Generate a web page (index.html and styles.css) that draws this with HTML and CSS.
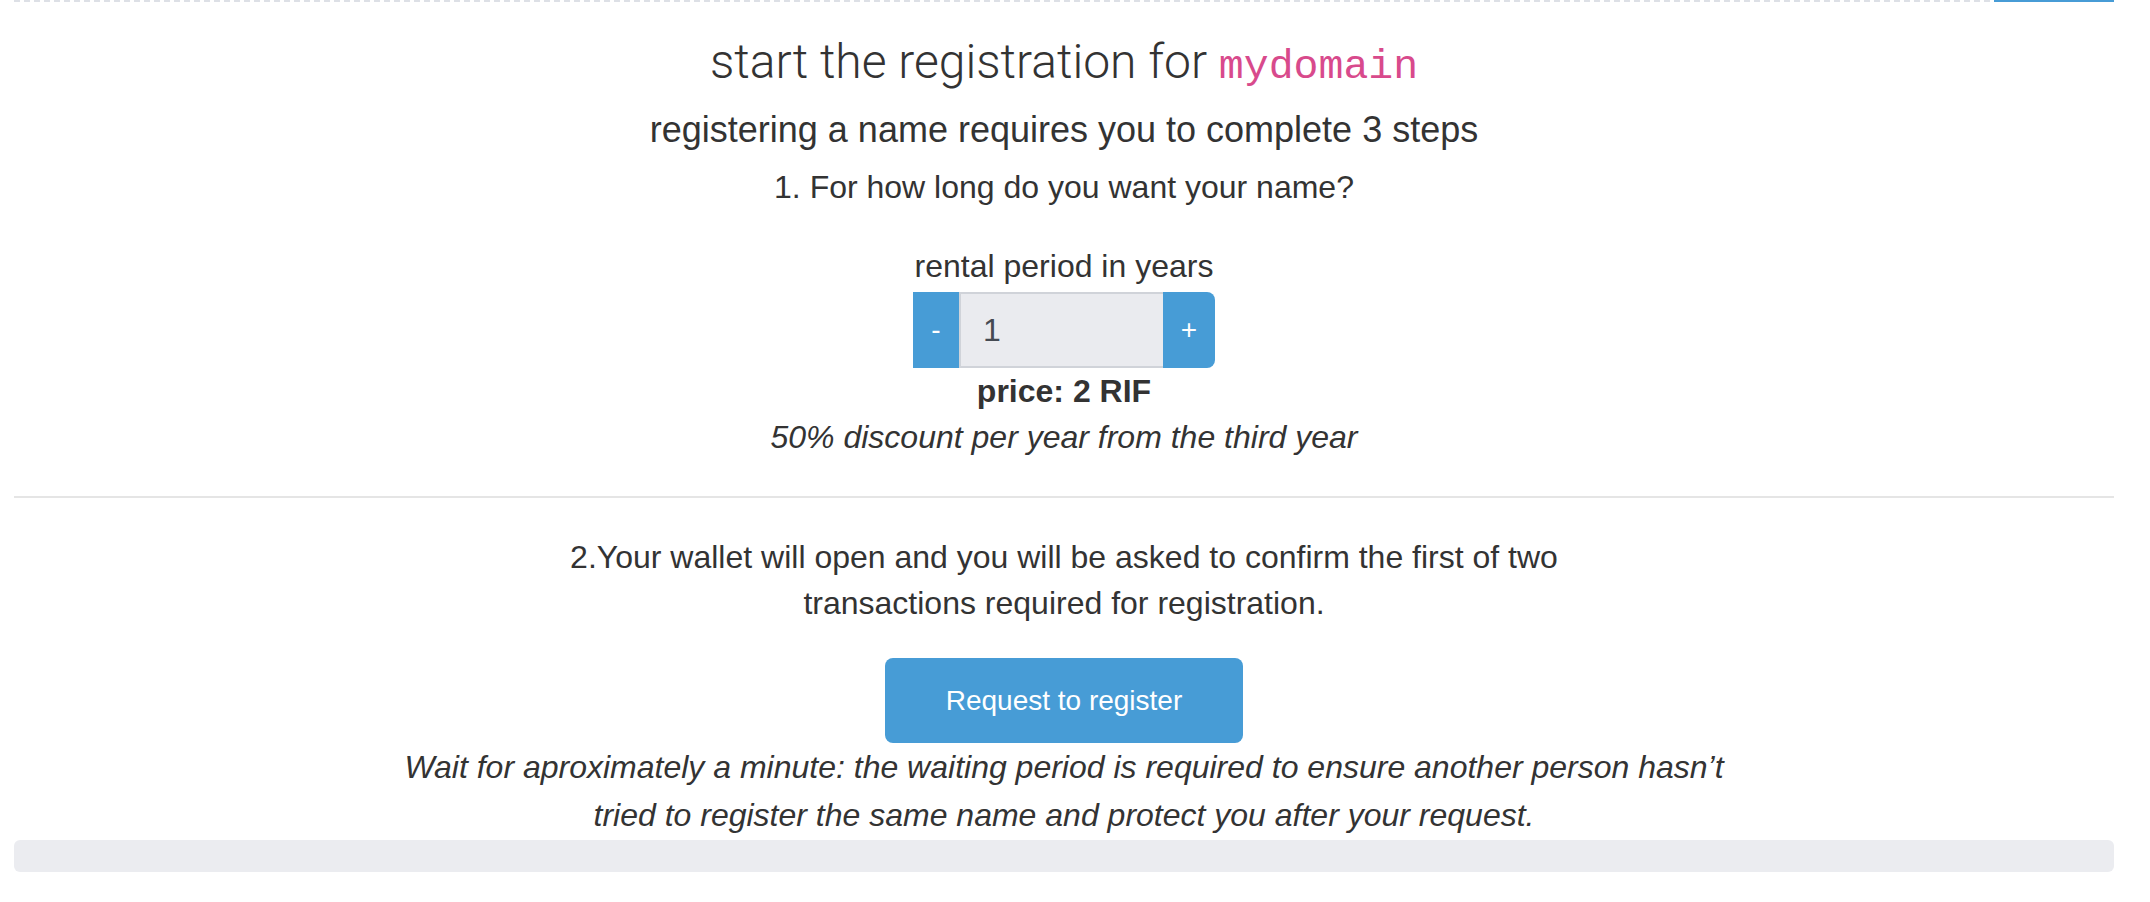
FILE: index.html
```html
<!DOCTYPE html>
<html lang="en">
<head>
<meta charset="utf-8">
<title>Register mydomain</title>
<link rel="stylesheet" href="styles.css">
</head>
<body>
<div class="topbar"><div class="topbar-dashes"></div><div class="topbar-fill"></div></div>
<main class="page">
  <h1 class="title">start the registration for <code class="domain">mydomain</code></h1>
  <h2 class="subtitle">registering a name requires you to complete 3 steps</h2>
  <p class="step step-one">1. For how long do you want your name?</p>
  <label class="period-label" for="years">rental period in years</label>
  <div class="stepper-row">
    <div class="stepper">
      <button class="stepper-btn stepper-minus" type="button">-</button>
      <input id="years" class="stepper-input" type="text" value="1">
      <button class="stepper-btn stepper-plus" type="button">+</button>
    </div>
  </div>
  <p class="price">price: 2 RIF</p>
  <p class="discount">50% discount per year from the third year</p>
  <hr class="divider">
  <p class="step step-two">2.Your wallet will open and you will be asked to confirm the first of two transactions required for registration.</p>
  <button class="register" type="button">Request to register</button>
  <p class="note">Wait for aproximately a minute: the waiting period is required to ensure another person hasn’t tried to register the same name and protect you after your request.</p>
  <div class="progress"></div>
</main>
</body>
</html>
```
FILE: styles.css
```css
html, body {
  margin: 0;
  padding: 0;
  background: #ffffff;
}

body {
  font-family: "Liberation Sans", Arial, sans-serif;
  color: #333333;
}

.topbar {
  display: flex;
  height: 2px;
  margin: 0 36px 0 14px;
}

.topbar-dashes {
  flex: 1;
  background: repeating-linear-gradient(90deg, #dde0e6 0 6px, transparent 6px 10px);
}

.topbar-fill {
  width: 120px;
  background: #479cd6;
}

.page {
  margin: 0 36px 0 14px;
  text-align: center;
}

.title {
  margin: 32px 0 0;
  font-family: Roboto, "Liberation Sans", sans-serif;
  font-size: 48px;
  line-height: 56px;
  font-weight: 300;
  color: #333333;
}

.domain {
  font-family: "Liberation Mono", "DejaVu Sans Mono", monospace;
  font-size: 41.5px;
  font-weight: normal;
  color: #d84a8c;
  padding: 0;
  background: none;
}

.subtitle {
  margin: 13px 0 0;
  font-size: 36px;
  line-height: 44px;
  font-weight: normal;
}

.step {
  font-size: 32px;
  line-height: 46px;
  margin: 0;
}

.step-one {
  margin-top: 12px;
}

.period-label {
  display: block;
  margin-top: 33px;
  font-size: 32px;
  line-height: 46px;
}

.stepper-row {
  display: flex;
  justify-content: center;
  margin-top: 3px;
}

.stepper {
  display: flex;
  height: 76px;
}

.stepper-btn {
  border: 0;
  padding: 0;
  margin: 0;
  background: #479cd6;
  color: #ffffff;
  font-family: "Liberation Sans", Arial, sans-serif;
  font-size: 28px;
  line-height: 76px;
}

.stepper-minus {
  width: 46px;
}

.stepper-plus {
  width: 52px;
  border-radius: 0 8px 8px 0;
}

.stepper-input {
  box-sizing: border-box;
  width: 204px;
  height: 76px;
  margin: 0;
  padding: 0 0 0 22px;
  border: 2px solid #d0d3d9;
  border-right: 0;
  background: #eaebef;
  color: #454a52;
  font-family: "Liberation Sans", Arial, sans-serif;
  font-size: 32px;
  outline: none;
}

.price {
  margin: 0;
  font-size: 32px;
  line-height: 46px;
  font-weight: bold;
}

.discount {
  margin: 0;
  font-size: 32px;
  line-height: 46px;
  font-style: italic;
}

.divider {
  margin: 36px 0 0;
  border: 0;
  height: 2px;
  background: #e5e5e5;
}

.step-two {
  max-width: 1050px;
  margin: 36px auto 0;
}

.register {
  display: block;
  margin: 32px auto 0;
  padding: 23px 61px 22px;
  border: 0;
  border-radius: 8px;
  background: #479cd6;
  color: #ffffff;
  font-family: "Liberation Sans", Arial, sans-serif;
  font-size: 28px;
  line-height: 40px;
}

.note {
  max-width: 1360px;
  margin: 0 auto;
  font-size: 32px;
  line-height: 48px;
  font-style: italic;
}

.progress {
  margin-top: 1px;
  height: 32px;
  border-radius: 6px;
  background: #ebecf0;
}
```
